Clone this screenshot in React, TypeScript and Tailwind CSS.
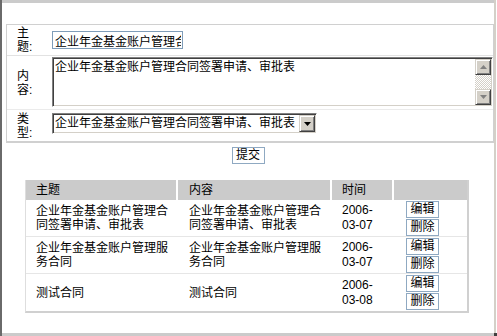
import React from 'react';

interface Contract {
  title: string;
  content: string;
  year: string;
  day: string;
}

const contracts: Contract[] = [
  { title: '企业年金基金账户管理合同签署申请、审批表', content: '企业年金基金账户管理合同签署申请、审批表', year: '2006-', day: '03-07' },
  { title: '企业年金基金账户管理服务合同', content: '企业年金基金账户管理服务合同', year: '2006-', day: '03-07' },
  { title: '测试合同', content: '测试合同', year: '2006-', day: '03-08' },
];

const fullTitle = '企业年金基金账户管理合同签署申请、审批表';

// classic win2k raised button face
const raised =
  'bg-[#d4d0c8] border border-t-[#d4d0c8] border-l-[#d4d0c8] border-r-[#404040] border-b-[#404040] shadow-[inset_1px_1px_0_#ffffff,inset_-1px_-1px_0_#808080]';

const inset =
  'border border-t-[#808080] border-l-[#808080] border-r-white border-b-white shadow-[inset_1px_1px_0_#404040,inset_-1px_-1px_0_#d4d0c8] p-[1px]';

const Arrow: React.FC<{ up?: boolean; color: string }> = ({ up, color }) => (
  <svg width="7" height="4" viewBox="0 0 7 4" className="block">
    <polygon points={up ? '3.5,0 7,4 0,4' : '0,0 7,0 3.5,4'} fill={color} />
  </svg>
);

const FormLabel: React.FC<{ text: string }> = ({ text }) => (
  <div className="w-[45px] shrink-0 self-center px-[10px] leading-[14px]">{text}</div>
);

const FormTable: React.FC = () => (
  <div className="ml-[4px] mt-[21px] w-[488px] border border-[#d0d0d0] border-b-2">
    <div className="flex h-[31px] items-center border-b border-[#e2e2e2]">
      <FormLabel text="主题:" />
      <input
        readOnly
        value={fullTitle}
        className="h-[18px] w-[131px] border border-[#7f9db9] bg-white pl-[2px] pr-[1px] text-[12px] leading-[16px] outline-none"
      />
    </div>
    <div className="flex h-[54px] items-start border-b border-[#ebebeb] pt-[1px]">
      <FormLabel text="内容:" />
      <div className={`flex h-[50px] w-[441px] ${inset}`}>
        <textarea
          readOnly
          value={fullTitle}
          className="flex-1 resize-none overflow-hidden bg-white px-[1px] pt-[1px] text-[12px] leading-[14px] outline-none"
        />
        <div className="flex w-[16px] flex-col">
          <div className={`flex h-[16px] items-center justify-center ${raised}`}>
            <Arrow up color="#808080" />
          </div>
          <div className="flex-1 bg-[repeating-conic-gradient(#d4d0c8_0_25%,#ffffff_0_50%)] bg-[length:2px_2px]" />
          <div className={`flex h-[16px] items-center justify-center ${raised}`}>
            <Arrow color="#808080" />
          </div>
        </div>
      </div>
    </div>
    <div className="flex h-[31px] items-start">
      <FormLabel text="类型:" />
      <div className={`mt-[3px] flex h-[21px] w-[265px] ${inset}`}>
        <div className="flex-1 overflow-hidden whitespace-nowrap bg-white pl-[1px] leading-[17px]">{fullTitle}</div>
        <div className={`flex w-[16px] items-center justify-center ${raised}`}>
          <Arrow color="#000000" />
        </div>
      </div>
    </div>
  </div>
);

const SmallButton: React.FC<{ label: string }> = ({ label }) => (
  <button className="h-[17px] w-[33px] border border-[#8fa9c2] bg-white text-[12px] leading-[15px]">{label}</button>
);

const ListTable: React.FC = () => (
  <div className="ml-[23px] mt-[16px] w-[444px] border-l border-[#dedede] border-r-2 border-r-[#d0d0d0] border-b-2 border-b-[#d0d0d0]">
    <div className="flex h-[20px] leading-[20px]">
      <div className="w-[152px] border-r-2 border-white bg-[#cbcbcb] pl-[10px]">主题</div>
      <div className="w-[154px] border-r-2 border-white bg-[#cbcbcb] pl-[11px]">内容</div>
      <div className="w-[62px] border-r-2 border-white bg-[#cbcbcb] pl-[10px]">时间</div>
      <div className="flex-1 bg-[#cbcbcb]" />
    </div>
    {contracts.map((c, i) => (
      <div
        key={i}
        className={`flex h-[37px] items-center ${i < contracts.length - 1 ? 'border-b border-[#e6e6e6]' : ''}`}
      >
        <div className="w-[152px] pl-[10px] pr-[8px] leading-[14px]">{c.title}</div>
        <div className="w-[154px] pl-[11px] pr-[8px] leading-[14px]">{c.content}</div>
        <div className="w-[62px] pl-[10px] pr-[14px] leading-[15px]">
          {c.year}
          <wbr />
          {c.day}
        </div>
        <div className="flex flex-col gap-[1px] pl-[12px]">
          <SmallButton label="编辑" />
          <SmallButton label="删除" />
        </div>
      </div>
    ))}
  </div>
);

export default function App() {
  return (
    <div className="flex h-[336px] w-[497px] bg-white font-['Liberation_Sans','Noto_Sans_CJK_SC',sans-serif] text-[12px] text-black">
      <div className="flex w-[494px] flex-col border-l-2 border-[#6a6a6a]">
        <div className="h-[3px] bg-[#cbcbcb]" />
        <main className="flex-1 overflow-hidden">
          <FormTable />
          <div className="mt-[4px] flex justify-center">
            <SmallButton label="提交" />
          </div>
          <ListTable />
        </main>
        <div className="h-[3px] bg-[#cbcbcb]" />
      </div>
      <div className="flex w-[3px] flex-col">
        <div className="flex flex-1">
          <div className="w-[2px] bg-[#d4d0c8]" />
          <div className="w-px bg-white" />
        </div>
        <div className="h-[3px] bg-[#404040]" />
      </div>
    </div>
  );
}
